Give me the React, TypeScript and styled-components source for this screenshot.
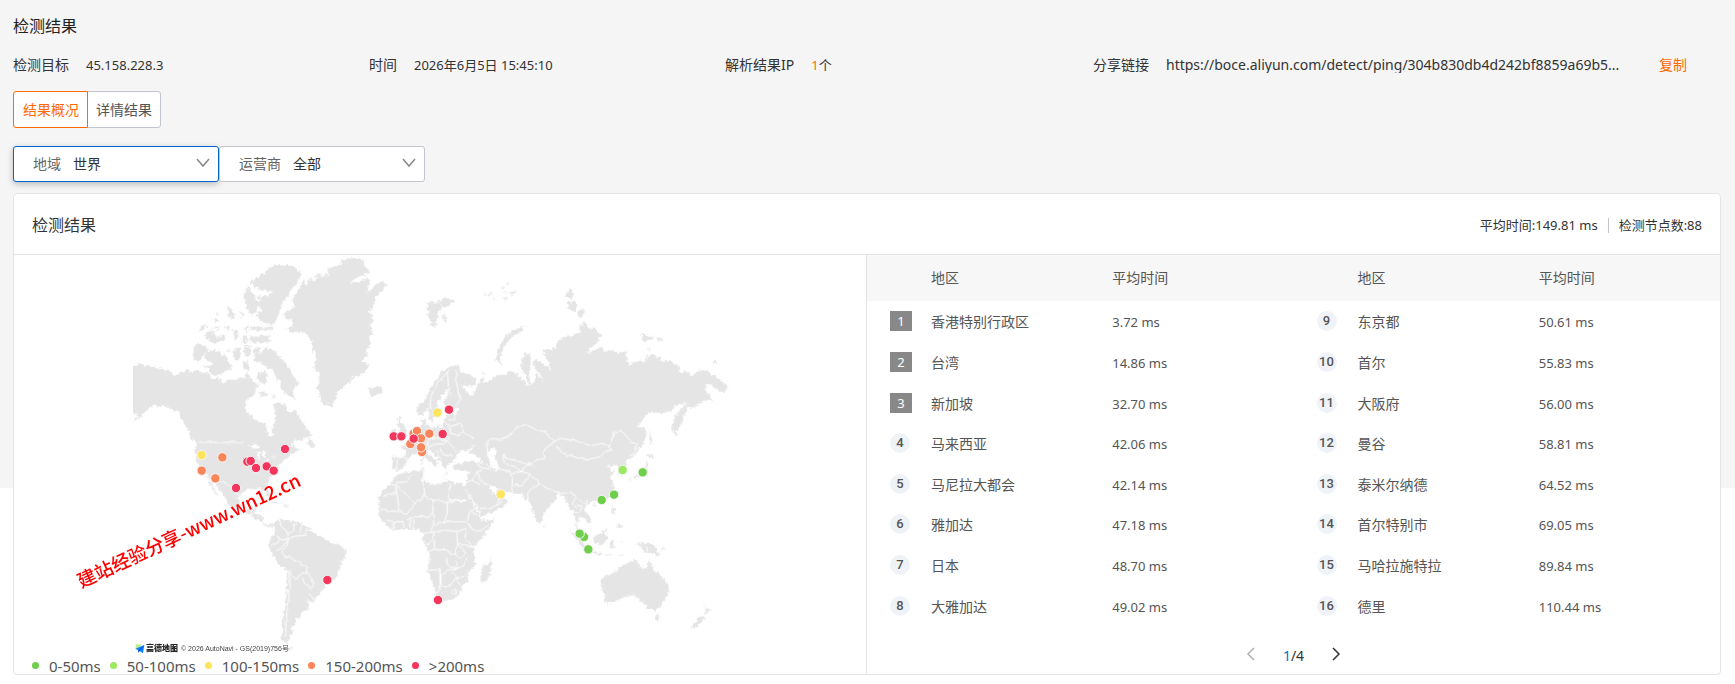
import React, { useState } from 'react';
import styled, { createGlobalStyle } from 'styled-components';

const GlobalStyle = createGlobalStyle`
  * { box-sizing: border-box; }
  body {
    margin: 0;
    background: #fff;
    font-family: "Noto Sans", "Noto Sans CJK SC", sans-serif;
    font-size: 14px;
    line-height: 20px;
    color: #333;
  }
  button, select { font: inherit; color: inherit; }
`;

const Page = styled.main`
  padding: 14px 14px 9px 13px;
  background: linear-gradient(#f5f5f5 488px, #fff 0);
`;

const PageTitle = styled.h1`
  margin: 0 0 17px;
  font-size: 16px;
  line-height: 24px;
  font-weight: 400;
  color: #222;
`;

const InfoGrid = styled.dl`
  display: grid;
  grid-template-columns: 356fr 356fr 368fr 628fr;
  margin: 0 0 16px;
`;

const InfoItem = styled.div`
  display: flex;
  align-items: center;
  gap: 17px;
  height: 20px;
  min-width: 0;
`;

const InfoLabel = styled.dt`
  flex: none;
`;

const InfoValue = styled.dd`
  margin: 0;
  font-size: 13px;
  white-space: nowrap;
`;

const ShareUrl = styled(InfoValue)`
  width: 456px;
  overflow: hidden;
  font-size: 14px;
  line-height: 16px;
`;

const Accent = styled.span`
  color: #ff6a00;
`;

const CopyButton = styled.button`
  margin-left: 20px;
  padding: 0;
  border: 0;
  background: none;
  color: #ff6a00;
  cursor: pointer;
`;

const TabGroup = styled.div`
  display: flex;
  margin-bottom: 18px;
`;

const Tab = styled.button<{ $active: boolean }>`
  height: 37px;
  padding: 0 8px;
  background: #fff;
  border: 1px solid ${(p) => (p.$active ? '#ff6a00' : '#c0c6cc')};
  color: ${(p) => (p.$active ? '#ff6a00' : '#555')};
  position: relative;
  z-index: ${(p) => (p.$active ? 1 : 0)};
  cursor: pointer;
  &:first-child { border-radius: 3px 0 0 3px; padding-left: 9px; }
  &:last-child { border-radius: 0 3px 3px 0; margin-left: -1px; }
`;

const Filters = styled.div`
  display: flex;
  margin-bottom: 11px;
`;

const FilterBox = styled.label<{ $active?: boolean }>`
  display: flex;
  align-items: center;
  gap: 12px;
  width: 206px;
  height: 36px;
  padding: 0 8px 0 19px;
  background: #fff;
  border: 1px solid ${(p) => (p.$active ? '#0064c8' : '#c0c6cc')};
  border-radius: 3px;
  box-shadow: ${(p) => (p.$active ? '0 2px 6px rgba(0, 0, 0, 0.25)' : 'none')};
  color: #666;
`;

const FilterSelect = styled.select`
  flex: 1;
  min-width: 0;
  padding: 0;
  border: 0;
  outline: 0;
  background: none;
  appearance: none;
  color: #333;
`;

const Card = styled.section`
  background: #fff;
  border: 1px solid #e3e4e6;
  border-radius: 4px;
  overflow: hidden;
`;

const CardHeader = styled.header`
  display: flex;
  align-items: center;
  justify-content: space-between;
  height: 61px;
  padding: 2px 18px 0;
  border-bottom: 1px solid #e3e4e6;
`;

const CardTitle = styled.h2`
  margin: 0;
  font-size: 16px;
  line-height: 24px;
  font-weight: 400;
`;

const Summary = styled.div`
  display: flex;
  align-items: center;
  font-size: 13px;
`;

const SummaryItem = styled.span`
  & + & {
    margin-left: 10px;
    padding-left: 10px;
    border-left: 1px solid #c0c6cc;
    line-height: 15px;
  }
`;

const Num = styled.span`
  font-size: 13px;
`;

const CardBody = styled.div`
  display: grid;
  grid-template-columns: 1fr 1fr;
`;

const MapPanel = styled.div`
  display: flex;
  flex-direction: column;
  height: 419px;
  border-right: 1px solid #e3e4e6;
`;

const MapStage = styled.div`
  position: relative;
  height: 402px;
`;

const MapDrawing = styled.svg`
  display: block;
  width: 100%;
  height: 100%;
`;

const MapCredit = styled.div`
  position: absolute;
  left: 121px;
  bottom: 3px;
  display: flex;
  align-items: center;
  font-family: "Liberation Sans", "Noto Sans CJK SC", sans-serif;
  font-size: 7px;
  line-height: 10px;
  color: #444;
`;

const CreditBrand = styled.strong`
  margin: 0 3px 0 1px;
  font-size: 8px;
  font-weight: 900;
  color: #222;
`;

const Legend = styled.ul`
  display: flex;
  gap: 9px;
  margin: 0;
  padding: 0 0 0 18px;
  list-style: none;
`;

const LegendItem = styled.li<{ $color: string }>`
  display: flex;
  align-items: center;
  gap: 10px;
  height: 17px;
  font-size: 15px;
  line-height: 20px;
  color: #555;
  &::before {
    content: '';
    width: 7px;
    height: 7px;
    border-radius: 50%;
    background: ${(p) => p.$color};
  }
`;

const RankPanel = styled.div`
  display: flex;
  flex-direction: column;
`;

const RankTables = styled.div`
  display: grid;
  grid-template-columns: 1fr 1fr;
`;

const RankTable = styled.table`
  width: 100%;
  height: 371px;
  table-layout: fixed;
  border-collapse: collapse;
  color: #555;
`;

const HeadCell = styled.th<{ $width: string }>`
  width: ${(p) => p.$width};
  height: 46px;
  padding: 0;
  background: #f7f7f7;
  font-weight: 400;
  text-align: left;
`;

const Cell = styled.td`
  padding: 2px 0 0;
`;

const RankCell = styled.td`
  padding: 0 0 0 23px;
`;

const Rank = styled.span<{ $top: boolean }>`
  display: block;
  width: ${(p) => (p.$top ? 22 : 20)}px;
  height: 20px;
  border-radius: ${(p) => (p.$top ? '0' : '50%')};
  background: ${(p) => (p.$top ? '#888' : '#eff3f8')};
  color: ${(p) => (p.$top ? '#fff' : '#555')};
  font-family: ${(p) => (p.$top ? '"Noto Sans"' : 'Roboto')}, sans-serif;
  font-size: 13px;
  font-weight: ${(p) => (p.$top ? 400 : 500)};
  line-height: 20px;
  text-align: center;
`;

const Pager = styled.nav`
  display: flex;
  flex: 1;
  align-items: center;
  justify-content: center;
  gap: 22px;
  padding-top: 12px;
`;

const PagerButton = styled.button`
  display: flex;
  padding: 0 5px 4px;
  border: 0;
  background: none;
  color: #333;
  cursor: pointer;
  &:disabled { color: #b0b0b0; }
`;

const PageNow = styled.span`
  color: #0070cc;
`;

const LEVELS = {
  fast: '#6fcf4b',
  good: '#9be960',
  fair: '#ffe55c',
  slow: '#f98559',
  bad: '#f5365c',
};

const LEGEND: [string, string][] = [
  ['0-50ms', LEVELS.fast],
  ['50-100ms', LEVELS.good],
  ['100-150ms', LEVELS.fair],
  ['150-200ms', LEVELS.slow],
  ['>200ms', LEVELS.bad],
];

const REGIONS: [string, string][] = [
  ['香港特别行政区', '3.72 ms'],
  ['台湾', '14.86 ms'],
  ['新加坡', '32.70 ms'],
  ['马来西亚', '42.06 ms'],
  ['马尼拉大都会', '42.14 ms'],
  ['雅加达', '47.18 ms'],
  ['日本', '48.70 ms'],
  ['大雅加达', '49.02 ms'],
  ['东京都', '50.61 ms'],
  ['首尔', '55.83 ms'],
  ['大阪府', '56.00 ms'],
  ['曼谷', '58.81 ms'],
  ['泰米尔纳德', '64.52 ms'],
  ['首尔特别市', '69.05 ms'],
  ['马哈拉施特拉', '89.84 ms'],
  ['德里', '110.44 ms'],
];

const NODES: [number, number, string][] = [
  [245, 615, LEVELS.fair], [307, 622, LEVELS.slow], [245, 662, LEVELS.slow], [286, 685, LEVELS.slow],
  [382, 635, LEVELS.bad], [392, 633, LEVELS.bad], [408, 654, LEVELS.bad], [440, 649, LEVELS.bad],
  [461, 662, LEVELS.bad], [495, 597, LEVELS.bad], [348, 714, LEVELS.bad], [622, 990, LEVELS.bad],
  [952, 488, LEVELS.fair], [987, 479, LEVELS.bad], [968, 552, LEVELS.bad], [928, 551, LEVELS.slow],
  [881, 551, LEVELS.slow], [891, 543, LEVELS.slow], [903, 565, LEVELS.slow], [871, 582, LEVELS.slow],
  [906, 606, LEVELS.slow], [903, 592, LEVELS.slow], [881, 566, LEVELS.bad], [821, 559, LEVELS.bad],
  [844, 559, LEVELS.bad], [1142, 733, LEVELS.fair], [1508, 660, LEVELS.good], [1568, 667, LEVELS.fast],
  [1482, 734, LEVELS.fast], [1445, 750, LEVELS.fast], [1392, 861, LEVELS.fast], [1379, 851, LEVELS.fast],
  [1405, 898, LEVELS.fast], [954, 1050, LEVELS.bad],
];

const AMERICAS = [
  // mainland north america
  'M20 350 58 341 70 345 95 350 120 355 145 362 167 377 180 368 200 358 215 366 230 362 245 369 262 366 272 375 275 388 295 382 305 392 311 404 318 390 335 388 350 390 362 380 374 386 380 362 390 380 400 394 416 405 405 425 392 443 380 450 374 470 378 485 386 492 400 505 420 515 437 522 442 545 450 560 458 555 455 535 462 522 467 505 462 480 465 456 480 458 497 465 500 482 512 490 522 478 532 490 545 512 560 535 572 545 568 562 545 570 522 572 512 585 505 596 520 584 530 598 545 592 532 606 512 615 498 625 482 640 470 650 460 668 448 690 440 703 447 725 452 742 444 742 432 722 415 713 396 718 385 714 365 725 357 742 360 765 368 780 385 782 395 772 408 770 403 787 412 795 427 800 430 815 440 825 455 822 462 828 450 832 435 828 425 815 408 808 390 797 372 788 355 780 335 772 322 760 320 748 310 735 298 722 288 705 278 693 265 688 255 670 245 662 235 650 228 630 226 605 230 580 215 565 205 545 195 525 185 505 178 488 160 480 145 474 130 466 115 470 100 465 85 475 70 490 58 502 39 518 52 500 50 490 20 489Z',
  'M270 690 280 710 292 732 298 740 288 733 276 713 264 694Z',
  'M558 580 570 563 577 576 589 588 575 592Z',
  // canadian arctic
  'M222 290 232 282 250 286 268 295 262 305 252 312 245 325 232 337 218 325Z',
  'M258 308 285 300 300 305 318 318 325 335 338 355 320 362 300 374 278 375 268 360 245 345 285 345 262 333 252 320Z',
  'M340 300 362 293 362 320 350 334 338 318Z M370 291 392 288 395 312 376 320Z M368 334 384 334 388 362 370 356Z M318 296 328 300 325 308Z',
  'M402 300 412 290 420 298 418 315 430 300 440 292 455 300 470 308 482 322 497 340 510 355 520 378 535 400 526 415 518 420 524 448 508 436 490 425 480 412 486 398 470 382 458 362 445 352 430 345 420 338 402 335Z',
  'M412 372 436 360 443 385 430 402 416 395Z M415 428 430 420 444 435 435 441 420 438Z M465 380 476 384 470 394Z M452 432 470 442 455 446Z M484 400 496 410 492 425 482 415Z',
  'M388 262 420 258 450 255 450 277 415 278 390 277Z M365 260 382 258 382 280 368 276Z M338 240 355 240 358 262 345 268Z M370 232 384 230 380 250Z',
  'M255 252 275 240 290 262 315 255 315 272 285 280 262 270Z M233 245 246 228 265 222 250 240Z M272 232 300 230 296 240Z',
  'M278 207 295 206 290 217Z M285 192 298 187 298 195Z M320 170 336 180 346 200 330 206Z M358 182 372 190 368 208Z M310 232 332 230 322 240Z M347 150 354 150 352 158Z',
  'M370 135 385 108 395 125 405 145 418 160 410 185 395 200 378 168Z',
  'M390 98 415 80 430 70 450 50 490 42 520 48 545 72 535 95 515 115 500 140 485 160 478 185 470 205 455 228 440 220 415 208 408 190 428 185 415 165 425 150 405 140 440 138 465 126 430 122 405 112Z',
  'M395 228 430 232 455 230 458 240 420 242 390 238Z',
  // greenland
  'M490 192 510 180 525 165 515 150 530 130 545 100 552 85 558 108 568 92 572 78 582 100 590 72 605 70 608 88 615 62 628 90 622 55 660 45 670 28 700 20 730 30 735 50 748 62 735 75 715 80 690 98 715 95 735 85 750 92 740 130 765 108 785 93 800 103 790 120 768 135 765 160 748 185 762 208 748 230 762 245 745 262 755 280 738 300 742 320 726 332 745 345 740 362 720 375 695 382 690 400 670 410 655 425 645 445 635 473 625 462 610 465 600 440 592 415 598 390 595 368 582 360 583 345 590 330 578 300 575 275 560 255 540 245 515 248 498 238 518 225 520 212 495 205Z',
  'M742 410 755 420 770 408 785 412 788 425 770 438 752 440 750 428Z',
  // caribbean
  'M448 748 465 752 478 762 462 758Z M486 764 505 768 492 772Z',
  // south america
  'M460 828 470 812 485 808 500 812 525 815 545 820 560 832 578 845 600 858 620 872 640 880 665 888 680 902 678 915 665 935 658 955 655 975 640 988 622 995 612 1015 600 1030 585 1045 576 1055 560 1050 568 1065 560 1082 543 1088 545 1100 528 1102 525 1120 513 1132 521 1145 510 1155 505 1170 500 1182 488 1178 485 1160 488 1140 484 1130 490 1100 495 1070 498 1040 500 1010 502 980 500 960 480 948 465 925 455 905 445 890 452 865 465 850Z',
  'M500 1190 520 1200 506 1200Z',
];

const EURASIA = [
  'M170 478 175 462 190 455 200 440 210 418 225 395 240 375 250 362 265 352 285 345 298 352 300 362 315 370 335 378 350 392 345 405 325 410 305 402 315 420 328 435 345 438 338 422 352 410 360 400 362 385 372 380 372 398 388 395 404 378 420 375 440 372 450 362 470 372 485 385 495 400 510 408 500 385 485 355 487 325 500 308 512 315 512 345 507 370 512 402 524 394 522 370 535 375 548 396 540 370 525 355 518 338 530 325 545 340 560 348 572 364 568 340 555 320 548 300 575 298 588 292 590 275 610 262 640 255 660 245 658 230 672 215 690 235 710 238 722 258 712 280 695 290 680 312 705 300 722 292 735 305 755 300 775 308 798 303 800 325 812 347 822 335 840 332 855 336 860 318 880 316 895 322 905 334 925 330 945 345 960 348 958 365 985 366 1000 374 1020 358 1045 365 1065 380 1085 393 1092 402 1108 410 1095 425 1080 425 1065 412 1045 403 1032 415 1045 430 1058 448 1040 450 1020 460 1002 472 985 472 978 485 970 500 968 520 955 535 946 560 937 535 940 510 950 490 965 475 985 455 975 460 950 465 935 480 925 488 905 487 868 487 850 505 830 530 855 535 860 555 850 580 835 600 820 620 800 632 797 645 794 668 786 678 778 672 775 650 765 645 742 650 752 658 764 664 750 680 758 695 762 715 758 735 745 748 725 755 700 752 690 760 680 765 672 775 678 788 690 800 697 812 685 820 675 808 660 798 655 810 650 820 656 835 668 848 675 862 662 850 648 828 645 800 640 778 628 782 622 760 608 735 592 732 588 745 570 768 550 788 548 810 538 824 525 805 515 775 508 750 495 748 485 732 455 730 430 722 410 720 402 708 388 704 395 722 405 735 418 742 435 745 443 752 430 772 410 780 385 792 362 800 355 780 340 755 325 730 315 712 318 698 325 675 328 662 310 662 285 660 278 645 300 640 330 632 355 638 372 640 358 625 345 616 325 612 345 582 330 595 318 605 305 602 292 612 285 630 278 637 262 640 257 660 245 645 235 628 225 615 208 600 200 604 215 620 238 640 228 644 230 655 215 640 198 625 185 612 170 610 155 618 142 632 130 655 112 663 96 657 98 620 130 622 137 610 135 598 120 590 140 584 158 566 165 545 180 530 188 522 184 510 195 506 198 525 215 535 230 530 248 530 252 510 262 496 292 488 300 480 285 476 265 476 252 462 252 448 268 430 268 412 250 430 240 445 230 465 236 485 225 500 215 518 208 505 205 480 198 475 190 492 175 495Z',
  // british isles
  'M115 495 122 500 119 512 130 520 138 545 142 552 128 562 113 566 122 545 112 525Z M92 545 105 532 110 555 93 566Z',
  // arctic islands
  'M197 158 215 155 225 165 235 155 245 170 236 190 232 205 225 238 213 218 202 195 206 180Z M235 155 255 142 282 150 270 168 255 172 245 165Z M247 193 255 198 262 216 250 212Z',
  'M372 132 384 130 378 137Z M390 128 398 135 388 138Z M425 112 436 108 430 118Z M438 95 446 100 440 105Z M420 125 442 124 434 133Z M445 128 474 122 455 136Z M398 146 408 150 400 152Z M432 140 442 146 434 152Z',
  'M615 140 628 112 640 130 636 150Z M622 155 645 155 652 170 645 185 626 176Z M655 185 668 172 677 188 656 204Z',
  'M408 328 415 300 425 275 440 255 465 240 490 230 490 240 470 252 450 265 435 285 425 305 420 325 430 347 412 336Z',
  'M845 248 860 256 882 262 865 272 843 272Z M890 264 911 270 900 276Z M862 292 874 300 864 300Z M1056 340 1066 332 1073 342Z M365 366 376 368 370 376Z',
  // pacific islands
  'M868 540 876 570 876 582 869 586Z M864 608 882 620 868 628 862 622Z M859 630 866 640 862 660 845 678 825 682 822 676 845 668 856 648Z M806 684 816 682 812 694Z M697 762 708 762 704 770Z',
  // mediterranean islands
  'M180 655 196 655 190 662Z M184 625 189 625 189 645 184 645Z M330 667 342 664 338 670Z M252 668 266 670 254 673Z',
  // africa
  'M120 672 150 665 185 662 190 675 185 690 205 698 235 707 245 692 265 692 290 700 308 698 312 710 325 735 340 765 355 790 362 808 385 812 402 806 395 825 380 845 360 870 342 890 345 920 348 945 325 965 320 995 305 1010 300 1030 285 1045 260 1052 238 1050 230 1035 218 1000 203 960 210 930 205 905 195 885 188 870 190 850 180 838 160 840 135 835 100 842 80 825 65 810 55 795 60 770 55 745 70 720 90 705 105 680Z',
  'M364 972 370 945 385 940 395 928 395 950 388 975 378 1000 365 998Z',
  'M550 820 557 830 552 835 548 828Z',
  // indonesia, philippines, new guinea
  'M628 838 640 848 660 870 680 888 690 900 685 905 660 885 645 862Z M690 902 722 907 726 915 700 912Z M735 912 760 914 745 917Z M775 915 790 910 782 918Z',
  'M698 862 715 855 730 842 742 835 735 848 744 862 735 880 722 886 705 878Z M750 875 768 872 758 882 764 895 752 890Z M733 832 745 836 738 842Z',
  'M757 770 765 778 762 790 770 802 758 795Z M768 826 782 820 786 832 776 834Z M785 870 790 876 785 880Z',
  'M815 870 830 880 850 878 880 885 895 898 888 903 906 918 888 915 870 908 850 905 845 892Z M900 896 920 892 908 900Z',
  // australia and new zealand
  'M725 985 745 975 765 968 775 955 790 945 800 942 808 930 835 932 832 942 848 955 862 952 866 925 872 935 882 960 900 975 920 1000 925 1020 918 1045 905 1060 900 1075 882 1080 865 1075 850 1058 840 1055 835 1045 820 1035 790 1042 775 1050 745 1058 732 1055 735 1035 725 1015Z',
  'M882 1097 900 1100 892 1113 886 1110Z M1028 1060 1040 1075 1052 1078 1045 1090 1033 1096 1040 1082Z M1024 1097 1034 1100 1022 1117 1008 1134 995 1135 1000 1120Z',
];

const AMERICA_BORDERS =
  'M235 577 370 577 M262 690 300 694 318 700 340 712 352 735 M390 782 400 795 M480 812 484 830 500 842 505 860 M525 818 520 840 505 852 M545 822 540 850 M560 835 556 855 530 858 505 866 M452 890 470 880 480 868 470 862 M465 905 485 895 500 870 M480 868 505 865 500 890 485 905 495 920 510 922 M510 922 530 932 560 955 562 970 548 968 530 985 515 975 508 960 M502 960 512 985 508 1010 505 1050 500 1100 496 1160 M562 970 575 985 582 1000 570 1015 555 1005 548 985 M565 1030 575 1038 582 1050';

const WORLD_BORDERS =
  'M210 478 212 440 232 398 262 365 272 358 M262 365 265 410 M290 355 290 400 300 450 282 472 M285 490 285 505 262 510 M252 520 275 528 300 520 M300 520 310 545 342 568 M268 530 272 550 300 555 310 548 M250 532 262 555 270 572 M215 536 222 562 205 570 M222 562 245 568 262 572 M205 572 198 590 M205 590 230 582 250 582 M250 582 262 572 278 590 292 608 M240 595 250 615 278 618 M230 600 245 628 M150 560 175 575 180 600 M100 622 112 625 108 660 M130 622 150 628 M382 605 380 575 395 565 420 568 448 560 452 545 480 528 500 525 530 540 555 545 585 575 M585 575 560 590 550 605 555 625 530 630 505 645 470 632 440 625 430 612 M585 575 600 565 630 570 650 570 690 588 725 580 750 590 755 600 735 605 720 620 680 630 640 620 605 608 590 585 M750 590 762 545 785 542 800 560 815 578 832 578 825 605 808 620 M340 630 360 650 380 655 395 660 M378 640 392 655 M430 612 432 640 465 650 485 665 510 672 M415 655 450 665 455 680 452 710 458 728 M455 672 485 665 505 640 520 650 M510 672 530 690 540 705 575 722 610 730 635 725 M510 672 495 695 485 705 460 705 M540 700 522 710 510 720 500 748 M595 728 605 745 618 740 M635 725 645 740 640 765 652 775 M650 762 665 768 660 785 640 790 M655 748 680 765 675 795 M680 750 690 790 M315 700 335 690 350 665 368 660 M350 665 360 690 385 705 M335 690 362 705 M362 775 390 775 410 765 430 755 M410 765 418 745';

const AFRICA_BORDERS =
  'M108 698 140 695 155 675 M92 705 110 705 110 728 68 738 M110 728 120 785 62 780 M110 705 165 760 195 740 190 700 185 690 M165 760 140 790 120 785 M195 740 220 750 218 790 205 800 165 800 140 810 M268 700 268 750 318 750 M220 750 262 755 262 790 252 815 225 825 M262 755 320 752 M252 815 290 815 320 815 330 785 345 775 M320 815 335 840 365 842 385 825 M335 785 360 800 M190 850 225 845 255 840 290 845 320 835 M218 790 222 825 205 850 M100 842 102 815 130 815 132 835 M150 835 150 800 M160 838 162 810 M80 810 102 815 M195 885 220 870 222 845 M290 845 292 880 285 915 260 900 222 898 205 905 M222 898 225 870 M285 915 300 925 318 910 290 880 M292 880 340 890 M320 838 318 870 342 890 M205 960 240 960 240 980 262 960 290 955 M240 960 240 1018 230 1030 M242 975 245 1010 270 1005 290 980 272 962 M260 925 262 945 290 955 310 950 320 925 M290 955 290 935 M300 1005 290 985 315 975 M275 1025 285 1018 290 1028 280 1032Z';

const LAKES =
  'M385 585 405 582 425 592 408 596Z M412 604 420 602 418 630 411 628Z M426 600 440 605 436 620 428 618Z M428 634 450 625 442 635Z M452 622 472 616 460 624Z';

const CASPIAN =
  'M382 605 405 595 412 605 402 615 408 630 416 645 412 662 395 656 390 635 380 620Z';

function WorldMap() {
  return (
    <MapDrawing viewBox="-318 15 2556 1206" preserveAspectRatio="xMinYMin meet" role="img" aria-label="检测节点世界地图">
      <defs>
        <filter id="coast" x="-5%" y="-5%" width="110%" height="110%" colorInterpolationFilters="sRGB">
          <feTurbulence type="fractalNoise" baseFrequency="0.1" numOctaves="2" seed="4" />
          <feDisplacementMap in="SourceGraphic" scale="18" xChannelSelector="R" yChannelSelector="G" />
        </filter>
        <filter id="frontier" x="-5%" y="-5%" width="110%" height="110%" colorInterpolationFilters="sRGB">
          <feTurbulence type="fractalNoise" baseFrequency="0.06" numOctaves="1" seed="4" />
          <feDisplacementMap in="SourceGraphic" scale="12" xChannelSelector="R" yChannelSelector="G" />
        </filter>
        <clipPath id="tiles">
          <rect x="39" y="15" width="1820" height="1206" />
        </clipPath>
      </defs>
      <g clipPath="url(#tiles)">
        <g filter="url(#coast)">
          <path d={AMERICAS.join(' ')} fill="#e5e5e5" />
          <path d={LAKES} fill="#fff" />
          <g transform="translate(720 0)">
            <path d={EURASIA.join(' ')} fill="#e5e5e5" />
            <path d={CASPIAN} fill="#fff" />
          </g>
        </g>
      </g>
      <g filter="url(#frontier)" fill="none" stroke="#fff" strokeWidth="3">
        <path d={AMERICA_BORDERS} />
        <path transform="translate(720 0)" d={`${WORLD_BORDERS} ${AFRICA_BORDERS} M862 888V906`} />
      </g>
      {NODES.map(([x, y, color]) => (
        <circle key={`${x}-${y}`} cx={x} cy={y} r="14" fill={color} stroke="#f4f4f4" strokeWidth="3" />
      ))}
      <text
        transform="translate(-116 1015) rotate(-25)"
        fill="#f00"
        fontFamily='"Noto Sans CJK SC", sans-serif'
        fontSize="56"
        fontWeight="500"
      >
        建站经验分享-www.wn12.cn
      </text>
    </MapDrawing>
  );
}

function Chevron({ points, size, color = 'currentColor' }: {
  points: string;
  size: [number, number];
  color?: string;
}) {
  return (
    <svg width={size[0]} height={size[1]} viewBox={`0 0 ${size[0]} ${size[1]}`} aria-hidden="true">
      <polyline points={points} fill="none" stroke={color} strokeWidth="1.5" />
    </svg>
  );
}

function Ranking({ start }: { start: number }) {
  return (
    <RankTable>
      <thead>
        <tr>
          <HeadCell $width="15%" aria-label="排名" />
          <HeadCell $width="42.5%">地区</HeadCell>
          <HeadCell $width="42.5%">平均时间</HeadCell>
        </tr>
      </thead>
      <tbody>
        {REGIONS.slice(start, start + 8).map(([name, time], i) => (
          <tr key={name}>
            <RankCell>
              <Rank $top={start + i < 3}>{start + i + 1}</Rank>
            </RankCell>
            <Cell>{name}</Cell>
            <Cell>
              <Num>{time}</Num>
            </Cell>
          </tr>
        ))}
      </tbody>
    </RankTable>
  );
}

export default function App() {
  const [tab, setTab] = useState(0);
  return (
    <>
      <GlobalStyle />
      <Page>
        <PageTitle>检测结果</PageTitle>
        <InfoGrid>
          <InfoItem>
            <InfoLabel>检测目标</InfoLabel>
            <InfoValue>45.158.228.3</InfoValue>
          </InfoItem>
          <InfoItem>
            <InfoLabel>时间</InfoLabel>
            <InfoValue>2026年6月5日 15:45:10</InfoValue>
          </InfoItem>
          <InfoItem>
            <InfoLabel>解析结果IP</InfoLabel>
            <InfoValue>
              <Accent>1</Accent>个
            </InfoValue>
          </InfoItem>
          <InfoItem>
            <InfoLabel>分享链接</InfoLabel>
            <ShareUrl>https://boce.aliyun.com/detect/ping/304b830db4d242bf8859a69b5...</ShareUrl>
            <CopyButton type="button">复制</CopyButton>
          </InfoItem>
        </InfoGrid>

        <TabGroup>
          {['结果概况', '详情结果'].map((label, i) => (
            <Tab key={label} type="button" $active={tab === i} onClick={() => setTab(i)}>
              {label}
            </Tab>
          ))}
        </TabGroup>

        <Filters>
          <FilterBox $active>
            地域
            <FilterSelect>
              <option>世界</option>
            </FilterSelect>
            <Chevron points="1,1 7,8 13,1" size={[14, 12]} color="#888" />
          </FilterBox>
          <FilterBox>
            运营商
            <FilterSelect>
              <option>全部</option>
            </FilterSelect>
            <Chevron points="1,1 7,8 13,1" size={[14, 12]} color="#888" />
          </FilterBox>
        </Filters>

        <Card>
          <CardHeader>
            <CardTitle>检测结果</CardTitle>
            <Summary>
              <SummaryItem>平均时间:149.81 ms</SummaryItem>
              <SummaryItem>检测节点数:88</SummaryItem>
            </Summary>
          </CardHeader>
          <CardBody>
            <MapPanel>
              <MapStage>
                <WorldMap />
                <MapCredit>
                  <svg width="10" height="10" viewBox="0 0 30 30" aria-hidden="true">
                    <path d="M2 4Q2 1 5 1H20L12 14 2 16Z" fill="#b8f08c" />
                    <path d="M1 14 28 3 24 28 14 21 10 26 10 19Z" fill="#0a84ff" />
                    <path d="M10 19 28 3 14 21 10 26Z" fill="#0050d8" />
                  </svg>
                  <CreditBrand>高德地图</CreditBrand>© 2026 AutoNavi - GS(2019)756号
                </MapCredit>
              </MapStage>
              <Legend>
                {LEGEND.map(([label, color]) => (
                  <LegendItem key={label} $color={color}>
                    {label}
                  </LegendItem>
                ))}
              </Legend>
            </MapPanel>
            <RankPanel>
              <RankTables>
                <Ranking start={0} />
                <Ranking start={8} />
              </RankTables>
              <Pager aria-label="分页">
                <PagerButton type="button" aria-label="上一页" disabled>
                  <Chevron points="8,1 2,7 8,13" size={[10, 14]} />
                </PagerButton>
                <span>
                  <PageNow>1</PageNow>/4
                </span>
                <PagerButton type="button" aria-label="下一页">
                  <Chevron points="2,1 8,7 2,13" size={[10, 14]} />
                </PagerButton>
              </Pager>
            </RankPanel>
          </CardBody>
        </Card>
      </Page>
    </>
  );
}
